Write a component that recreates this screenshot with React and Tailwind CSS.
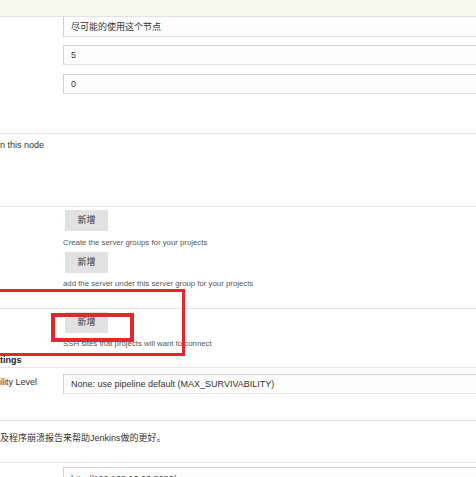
import React from 'react';

const font = { fontFamily: '"Liberation Sans", "Noto Sans CJK SC", sans-serif' };

const Input = ({ value, className = '' }) => (
  <div className={`ml-[63px] h-[20px] border border-[#d0d0d0] border-b-[#e4e4e4] border-r-0 bg-[#fdfdfd] pl-[7px] text-[9px] leading-[18px] text-[#333] ${className}`}>
    {value}
  </div>
);

const AddButton = () => (
  <div className="ml-[65px] flex h-[21px] w-[43px] items-center justify-center bg-[#e2e2e2] text-[9px] text-[#333]">
    新增
  </div>
);

const Desc = ({ children }) => (
  <div className="ml-[63px] text-[7.8px] leading-[10px] text-[#555]">{children}</div>
);

const Line = () => <div className="h-px bg-[#e6e6e6]" />;

export default function App() {
  return (
    <div className="relative h-[477px] w-[476px] overflow-hidden bg-white" style={font}>
      <div className="h-[17px] border-b border-[#e2e2e2] bg-[#f7f8ee]" />
      <Input value="尽可能的使用这个节点" className="h-[19px] border-t-0 pt-[1px]" />
      <Input value="5" className="mt-[8px]" />
      <Input value="0" className="mt-[9px]" />

      <div className="h-[39px]" />
      <Line />
      <div className="h-[72px] pt-[6px] text-[9px] leading-[10px] text-[#333]">n this node</div>
      <Line />

      <div className="h-[101px] pt-[3px]">
        <AddButton />
        <div className="mt-[7px]"><Desc>Create the server groups for your projects</Desc></div>
        <div className="mt-[4px]"><AddButton /></div>
        <div className="mt-[6px]"><Desc>add the server under this server group for your projects</Desc></div>
      </div>
      <Line />

      <div className="h-[46px] pt-[3px]">
        <AddButton />
        <div className="mt-[6px]"><Desc>SSH sites that projects will want to connect</Desc></div>
      </div>
      <div className="h-[12px] text-[9px] font-bold leading-[10px] text-[#222]">tings</div>
      <Line />

      <div className="flex h-[52px] pt-[6px]">
        <div className="w-[63px] pt-[3px] text-[9px] leading-[10px] text-[#333]">ility Level</div>
        <div className="h-[20px] flex-1 border border-r-0 border-[#d0d0d0] border-b-[#e4e4e4] bg-[#fdfdfd] pl-[7px] text-[9px] leading-[18px] text-[#333]">
          None: use pipeline default (MAX_SURVIVABILITY)
        </div>
      </div>
      <Line />
      <div className="h-[41px] pt-[12px] text-[9px] leading-[10px] text-[#333]">及程序崩溃报告来帮助Jenkins做的更好。</div>
      <Line />
      <Input value="http://192.168.10.20:8080/" className="mt-[4px] pt-[2px]" />

      {/* red highlight boxes */}
      <div className="absolute left-[-6px] top-[289px] h-[67px] w-[191px] border-[3px] border-[#e2282d]" />
      <div className="absolute left-[51px] top-[313px] h-[29px] w-[83px] border-[4px] border-[#e2282d]" />
    </div>
  );
}
